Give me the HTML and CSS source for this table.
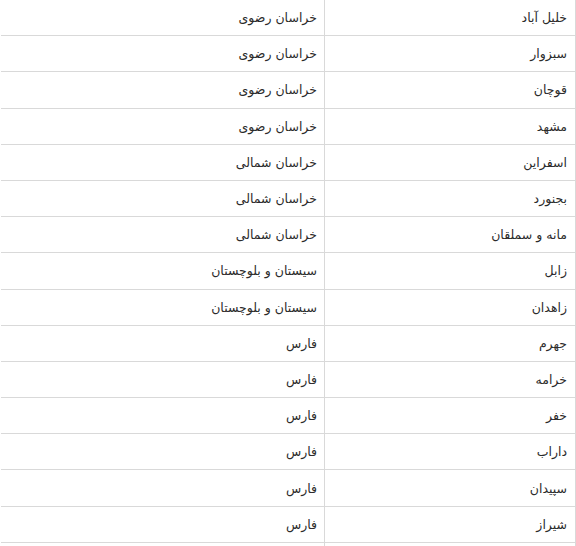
FILE: index.html
```html
<!DOCTYPE html>
<html lang="fa" dir="rtl">
<head>
<meta charset="utf-8">
<link rel="stylesheet" href="styles.css">
</head>
<body>
<table class="cities">
<tbody>
<tr><td class="city">خلیل آباد</td><td class="prov">خراسان رضوی</td></tr>
<tr><td class="city">سبزوار</td><td class="prov">خراسان رضوی</td></tr>
<tr><td class="city">قوچان</td><td class="prov">خراسان رضوی</td></tr>
<tr><td class="city">مشهد</td><td class="prov">خراسان رضوی</td></tr>
<tr><td class="city">اسفراین</td><td class="prov">خراسان شمالی</td></tr>
<tr><td class="city">بجنورد</td><td class="prov">خراسان شمالی</td></tr>
<tr><td class="city">مانه و سملقان</td><td class="prov">خراسان شمالی</td></tr>
<tr><td class="city">زابل</td><td class="prov">سیستان و بلوچستان</td></tr>
<tr><td class="city">زاهدان</td><td class="prov">سیستان و بلوچستان</td></tr>
<tr><td class="city">جهرم</td><td class="prov">فارس</td></tr>
<tr><td class="city">خرامه</td><td class="prov">فارس</td></tr>
<tr><td class="city">خفر</td><td class="prov">فارس</td></tr>
<tr><td class="city">داراب</td><td class="prov">فارس</td></tr>
<tr><td class="city">سپیدان</td><td class="prov">فارس</td></tr>
<tr><td class="city">شیراز</td><td class="prov">فارس</td></tr>
<tr><td class="city">&nbsp;</td><td class="prov">&nbsp;</td></tr>
</tbody>
</table>
</body>
</html>
```
FILE: styles.css
```css
html, body {
  margin: 0;
  padding: 0;
  background: #ffffff;
  overflow: hidden;
}
body {
  font-family: "DejaVu Sans", Tahoma, sans-serif;
  font-size: 12.5px;
  color: #2b2b2b;
}
.cities {
  direction: rtl;
  border-collapse: collapse;
  width: 575px;
  margin: -1px 0 0 0;
}
.cities td {
  height: 35.2px;
  padding: 0 7px;
  border-top: 1px solid #d9d9d9;
  border-bottom: 1px solid #d9d9d9;
  text-align: right;
  vertical-align: middle;
  white-space: nowrap;
}
.cities .city {
  width: 235px;
  border-right: 1px solid #d9d9d9;
  border-left: 1px solid #d9d9d9;
  padding-right: 8px;
}
.cities .prov {
  border-left: none;
}
```
